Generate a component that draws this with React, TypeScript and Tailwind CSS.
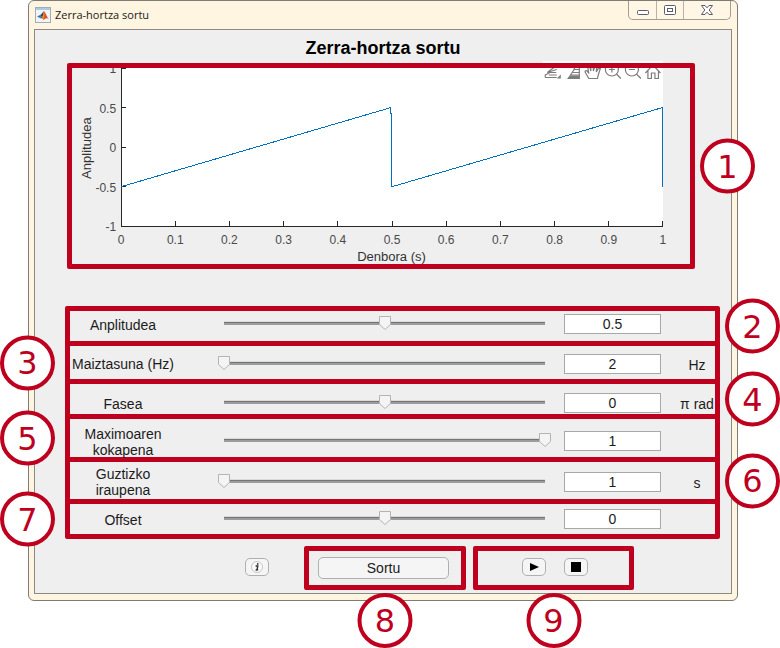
import { useState, type ReactNode } from "react";

const SANS = "font-['Liberation_Sans',Arial,sans-serif]";

/* ---------- Numbered callouts ---------- */

const BADGE_SIDE = {
  left: "right-full top-1/2 mr-[15px] -translate-y-1/2",
  right: "left-full top-1/2 ml-[10px] -translate-y-1/2",
  bottom: "left-1/2 top-full mt-2 -translate-x-1/2",
};

function Badge({ n, side }: { n: number; side: keyof typeof BADGE_SIDE }) {
  return (
    <span
      className={`absolute z-10 flex size-[55px] items-center justify-center rounded-full border-4 border-[#be001e] bg-white font-['DejaVu_Sans',sans-serif] text-[32px] leading-none text-[#be001e] ${BADGE_SIDE[side]}`}
    >
      {n}
    </span>
  );
}

/* ---------- Title bar ---------- */

function MatlabLogo() {
  return (
    <svg viewBox="0 0 16 16" className="size-4" aria-hidden="true">
      <rect x="0.5" y="0.5" width="15" height="15" fill="#f2f5f8" stroke="#a4adb6" />
      <rect x="1" y="1" width="14" height="2" fill="#a9cbe4" />
      <path d="M2 9.5 5 8 7 9.5 5.4 11.2Z" fill="#3d78b4" />
      <path d="M5 8C7 7 7.8 5 9 4.2L8.4 9 6.6 11.2 5.4 11.2 7 9.5Z" fill="#27446f" />
      <path d="M9 4.2C10.4 5 11.4 9 13.8 12 12 10.6 10.6 11 8.6 13 8.2 12 7.4 11.2 6.6 11.2 8 10 8.2 6 9 4.2Z" fill="#d9541e" />
      <path d="M9 4.2C9.8 6 9.6 9.4 8.6 13 8.2 12 7.4 11.2 6.6 11.2 8 10 8.2 6 9 4.2Z" fill="#f08a2c" />
    </svg>
  );
}

function TitleBar() {
  return (
    <header className="flex h-7 items-start justify-between pl-px pr-px">
      <div className="flex items-center gap-1 pt-[6px]">
        <MatlabLogo />
        <span className="font-['Open_Sans','Noto_Sans',sans-serif] text-[11px] leading-4 text-[#1a1a1a]">
          Zerra-hortza sortu
        </span>
      </div>
      <div className="flex h-[19px] divide-x divide-[#b9b3a6] rounded-b-[5px] border border-t-0 border-[#a39e93] bg-[#fff6e6]">
        <button type="button" aria-label="Minimize" className="flex w-7 items-center justify-center">
          <svg viewBox="0 0 14 14" className="size-[14px]" fill="#fff" stroke="#5b5c6b">
            <rect x="1.5" y="7.5" width="11" height="4" rx="1" />
          </svg>
        </button>
        <button type="button" aria-label="Maximize" className="flex w-[27px] items-center justify-center">
          <svg viewBox="0 0 14 14" className="size-[14px]" fill="#fff" stroke="#5b5c6b">
            <rect x="1.5" y="2.5" width="11" height="9" rx="1" />
            <rect x="4.5" y="5.5" width="5" height="3" />
          </svg>
        </button>
        <button type="button" aria-label="Close" className="flex w-[46px] items-center justify-center">
          <svg viewBox="0 0 14 14" className="size-[14px]" fill="#fff" stroke="#5b5c6b" strokeLinejoin="round">
            <path d="M1.5 2.5H5L7 4.8 9 2.5H12.5L9.2 7 12.5 11.5H9L7 9.2 5 11.5H1.5L4.8 7Z" />
          </svg>
        </button>
      </div>
    </header>
  );
}

/* ---------- Chart ---------- */

const PLOT = { left: 49, right: 590, top: 0, bottom: 158 };
const sx = (t: number) => PLOT.left + t * (PLOT.right - PLOT.left);
const sy = (v: number) => PLOT.bottom - ((v + 1) / 2) * (PLOT.bottom - PLOT.top);

const X_TICKS = [0, 0.1, 0.2, 0.3, 0.4, 0.5, 0.6, 0.7, 0.8, 0.9, 1];
const Y_TICKS = [-1, -0.5, 0, 0.5, 1];
const WAVE: [number, number][] = [
  [0, -0.5],
  [0.498, 0.5],
  [0.5, -0.5],
  [0.999, 0.5],
  [0.999, -0.5],
];

function AxesToolbar() {
  return (
    <g fill="none" stroke="#7c7c7c" strokeWidth="1.2">
      {/* export */}
      <path d="M475 4 482 -1M474.5 4.5 484 1.5M472.5 7 477 4.5 483.5 4.5M472.5 9.5H484M472.5 6.5V9.5M476 7H484" />
      <path d="M484 10.5H488V6.5Z" fill="#7c7c7c" stroke="none" />
      {/* brush */}
      <path d="M502.5 -2 501 2 495.5 10.5M506.5 -2V10.5M501 1.5H506.5M499.5 4.5H506.5M498 7H506.5" />
      <path d="M494 11 498 7.5H507V11Z" fill="#7c7c7c" stroke="none" />
      {/* pan */}
      <path d="M516 10.5 512.5 4.5C511.5 2.8 513.5 1.8 514.6 3.4L516 5.5 514.8 -1H517L518 3V-2H520.5V3L522 -1.5H524L523.4 4 525.5 0.5H527.5L525.4 7 524.6 10.5Z" />
      {/* zoom in */}
      <circle cx="539" cy="1.5" r="6.5" />
      <path d="M543.5 6 548 10.5M536 1.5H542M539 -1.5V4.5" />
      {/* zoom out */}
      <circle cx="559" cy="1.5" r="6.5" />
      <path d="M563.5 6 568 10.5M556 1.5H562" />
      {/* home */}
      <path d="M572.5 5 580 -3 587.5 5M575 3V10.5H578.5V5H582V10.5H585.5V3" />
    </g>
  );
}

function Chart() {
  return (
    <svg viewBox="0 0 617 196" className={`block w-full ${SANS}`} role="img" aria-label="Anplitudea / Denbora (s)">
      <rect x={PLOT.left} y={PLOT.top} width={PLOT.right - PLOT.left} height={PLOT.bottom} fill="#fff" />
      <g stroke="#262626" strokeWidth="1" shapeRendering="crispEdges">
        <path d={`M${PLOT.left} ${PLOT.top}V${PLOT.bottom}H${PLOT.right}`} fill="none" />
        {X_TICKS.map((t) => (
          <path key={t} d={`M${sx(t)} ${PLOT.bottom}v-5`} />
        ))}
        {Y_TICKS.map((v) => (
          <path key={v} d={`M${PLOT.left} ${sy(v)}h5`} />
        ))}
      </g>
      <g fill="#4a4a4a" fontSize="12">
        {X_TICKS.map((t) => (
          <text key={t} x={sx(t)} y="176" textAnchor="middle">
            {t}
          </text>
        ))}
        {Y_TICKS.map((v) => (
          <text key={v} x="44" y={sy(v) + 5} textAnchor="end">
            {v}
          </text>
        ))}
      </g>
      <g fill="#333" fontSize="13" textAnchor="middle">
        <text x="319" y="193">
          Denbora (s)
        </text>
        <text transform="translate(19 80) rotate(-90)">Anplitudea</text>
      </g>
      <polyline
        points={WAVE.map(([t, v]) => `${sx(t)},${sy(v)}`).join(" ")}
        fill="none"
        stroke="#0072bd"
        strokeWidth="1"
        shapeRendering="crispEdges"
      />
      <AxesToolbar />
    </svg>
  );
}

/* ---------- Parameter rows ---------- */

type Param = {
  id: string;
  label: string;
  min: number;
  max: number;
  step: number;
  value: number;
  unit?: string;
  badge: number;
  side: "left" | "right";
  row: string;
};

const PARAMS: Param[] = [
  { id: "anplitudea", label: "Anplitudea", min: 0, max: 1, step: 0.01, value: 0.5, badge: 2, side: "right", row: "h-[30px] pb-1" },
  { id: "maiztasuna", label: "Maiztasuna (Hz)", min: 2, max: 100, step: 1, value: 2, unit: "Hz", badge: 3, side: "left", row: "h-[33px] pt-[2px]" },
  { id: "fasea", label: "Fasea", min: -1, max: 1, step: 0.01, value: 0, unit: "π rad", badge: 4, side: "right", row: "h-[30px] pt-2" },
  { id: "maximoa", label: "Maximoaren kokapena", min: 0, max: 1, step: 0.01, value: 1, badge: 5, side: "left", row: "h-[38px] pt-[6px]" },
  { id: "iraupena", label: "Guztizko iraupena", min: 1, max: 10, step: 1, value: 1, unit: "s", badge: 6, side: "right", row: "h-[37px] pt-[2px]" },
  { id: "offset", label: "Offset", min: -1, max: 1, step: 0.01, value: 0, badge: 7, side: "left", row: "h-[30px]" },
];

function ParamRow({ p }: { p: Param }) {
  const [value, setValue] = useState(String(p.value));
  const num = Math.min(p.max, Math.max(p.min, Number(value) || 0));
  const pct = ((num - p.min) / (p.max - p.min)) * 100;
  return (
    <div className={`relative flex items-center ${p.row}`}>
      <label htmlFor={p.id} className="flex w-[106px] shrink-0 justify-center pt-px text-center text-sm leading-4">
        <span className={p.label.includes("(") ? "whitespace-nowrap" : "max-w-[90px]"}>{p.label}</span>
      </label>
      <div className="relative ml-12 mr-[19px] h-5 flex-1">
        <div className="absolute inset-x-0 top-[7px] h-1 border-t border-[#dadada] bg-[#9c9c9c]">
          <div className="h-px bg-[#757575]" />
        </div>
        <svg
          viewBox="0 0 12 14"
          className="absolute top-[2px] h-[14px] w-3 -translate-x-1/2"
          style={{ left: `${pct}%` }}
          aria-hidden="true"
        >
          <path d="M0.5 0.5H11.5V8.5L6 13.5 0.5 8.5Z" fill="#f4f4f4" stroke="#b4b4b4" />
        </svg>
        <input
          type="range"
          aria-label={p.label}
          min={p.min}
          max={p.max}
          step={p.step}
          value={num}
          onChange={(e) => setValue(e.target.value)}
          className="absolute inset-0 m-0 size-full cursor-pointer opacity-0"
        />
      </div>
      <input
        id={p.id}
        type="text"
        value={value}
        onChange={(e) => setValue(e.target.value)}
        className="h-5 w-[97px] shrink-0 border border-[#a8a8a8] bg-white text-center text-sm leading-4"
      />
      <span className="ml-[18px] w-9 shrink-0 whitespace-nowrap pt-[2px] text-center text-sm leading-4">{p.unit}</span>
      <Badge n={p.badge} side={p.side} />
    </div>
  );
}

/* ---------- Action bar ---------- */

function SmallButton({ label, children }: { label: string; children: ReactNode }) {
  return (
    <button
      type="button"
      aria-label={label}
      className="flex h-[18px] w-6 shrink-0 items-center justify-center rounded-[5px] border border-[#b0b0b0] bg-[#f5f5f5]"
    >
      {children}
    </button>
  );
}

function Actions() {
  return (
    <div className="flex items-center pb-[3px] pl-[210px]">
      <div className="pb-[2px]">
        <SmallButton label="Informazioa">
          <svg viewBox="0 0 12 12" className="size-3">
            <circle cx="6" cy="6" r="5.5" fill="#fbfbfb" stroke="#c4c4c4" />
            <path d="M4.6 5H6.8L6 8.8H7.2M4.6 9H6" fill="none" stroke="#333" strokeWidth="1.4" />
            <circle cx="6.7" cy="2.9" r="0.9" fill="#333" />
          </svg>
        </SmallButton>
      </div>
      <div className="relative ml-[35px] flex h-11 w-[162px] items-center rounded-[2px] border-5 border-[#be001e] pl-[9px]">
        <button
          type="button"
          className="h-[22px] w-[131px] rounded-[5px] border border-[#b0b0b0] bg-[#f5f5f5] text-sm leading-5"
        >
          Sortu
        </button>
        <Badge n={8} side="bottom" />
      </div>
      <div className="relative ml-[7px] flex h-11 w-[161px] items-center gap-[18px] rounded-[2px] border-5 border-[#be001e] pb-[2px] pl-11">
        <SmallButton label="Erreproduzitu">
          <svg viewBox="0 0 10 10" className="size-[10px]">
            <path d="M1 1 10 5 1 9Z" fill="#000" />
          </svg>
        </SmallButton>
        <SmallButton label="Gelditu">
          <span className="size-[10px] bg-black" />
        </SmallButton>
        <Badge n={9} side="bottom" />
      </div>
    </div>
  );
}

export default function App() {
  return (
    <div className={`bg-white pb-12 pl-7 pr-[42px] text-[#1c1c1c] ${SANS}`}>
      <div className="rounded-[6px] border border-[#7e7b75] bg-[#fff5e0] px-[5px] pb-[6px]">
        <TitleBar />
        <main className="border border-[#8a8a84] bg-[#efefef]">
          <h1 className="pb-[2px] pt-[7px] text-center text-lg font-bold leading-[22px] text-black">
            Zerra-hortza sortu
          </h1>
          <div className="pl-8 pr-9">
            <div className="ml-auto mr-8 h-[2px] w-[120px] bg-white" />
            <div className="relative rounded-[2px] border-5 border-[#be001e]">
              <Chart />
              <Badge n={1} side="right" />
            </div>
          </div>
          <form
            className="mb-[7px] ml-[30px] mr-[11px] mt-[37px] divide-y-5 divide-[#be001e] rounded-[2px] border-5 border-[#be001e]"
            onSubmit={(e) => e.preventDefault()}
          >
            {PARAMS.map((p) => (
              <div key={p.id}>
                <ParamRow p={p} />
              </div>
            ))}
          </form>
          <Actions />
        </main>
      </div>
    </div>
  );
}
